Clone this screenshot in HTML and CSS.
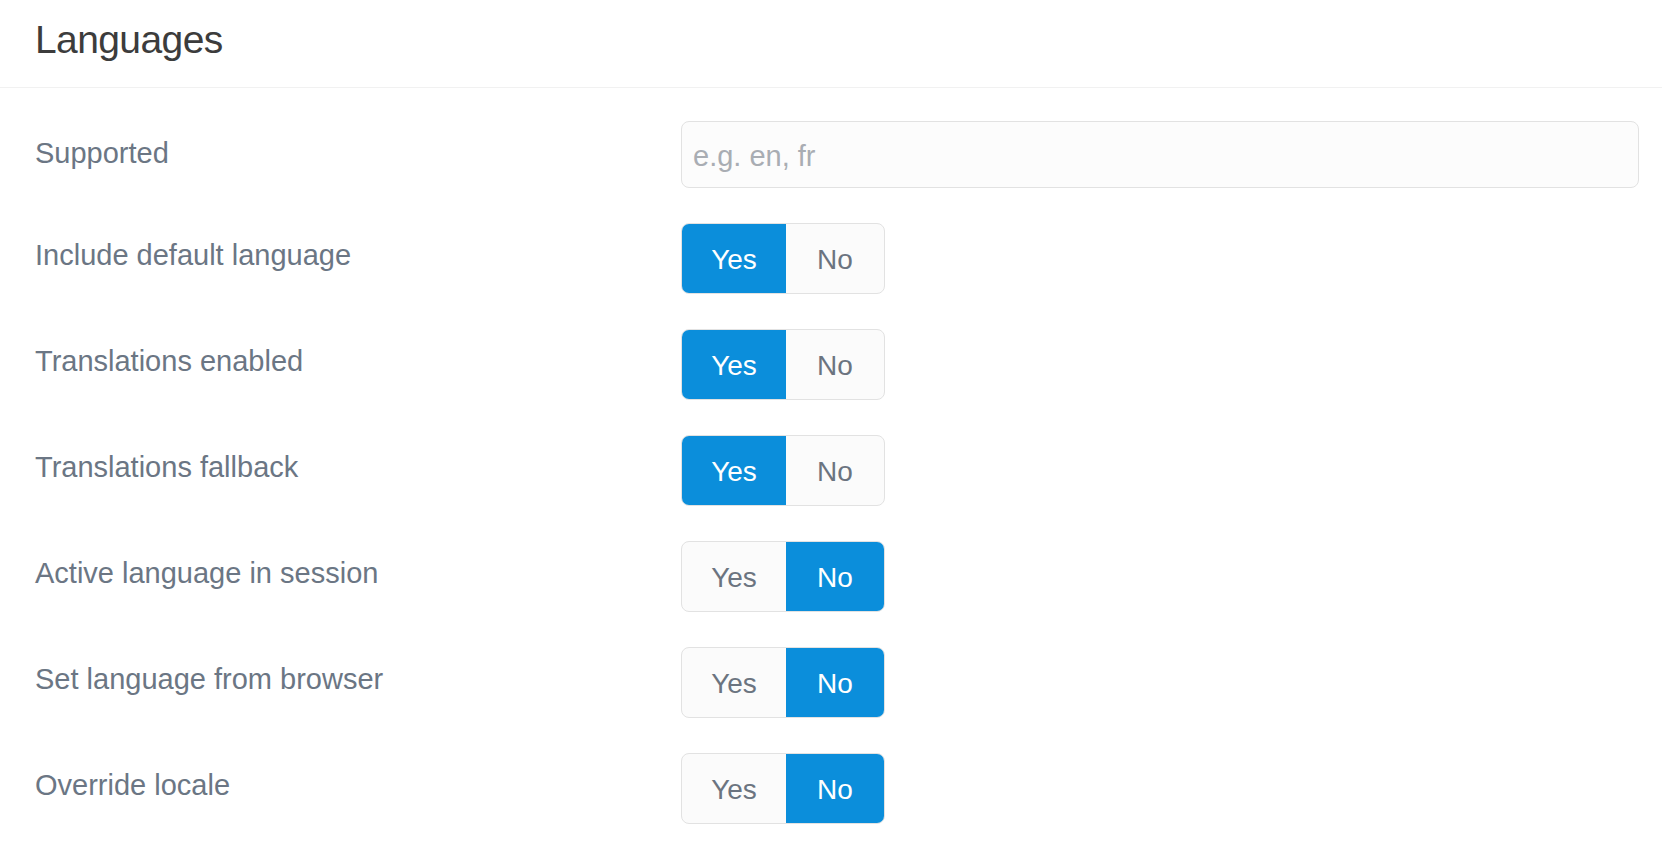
FILE: index.html
```html
<!DOCTYPE html>
<html lang="en">
<head>
<meta charset="utf-8">
<title>Languages</title>
<link rel="stylesheet" href="styles.css">
</head>
<body>
<div class="page">
  <header class="header">
    <h1 class="title">Languages</h1>
  </header>
  <div class="form">
    <div class="row">
      <label class="label">Supported</label>
      <div class="control"><input class="text-input" type="text" placeholder="e.g. en, fr"></div>
    </div>
    <div class="row">
      <label class="label">Include default language</label>
      <div class="control"><div class="toggle"><span class="seg seg-yes active">Yes</span><span class="seg seg-no">No</span></div></div>
    </div>
    <div class="row">
      <label class="label">Translations enabled</label>
      <div class="control"><div class="toggle"><span class="seg seg-yes active">Yes</span><span class="seg seg-no">No</span></div></div>
    </div>
    <div class="row">
      <label class="label">Translations fallback</label>
      <div class="control"><div class="toggle"><span class="seg seg-yes active">Yes</span><span class="seg seg-no">No</span></div></div>
    </div>
    <div class="row">
      <label class="label">Active language in session</label>
      <div class="control"><div class="toggle"><span class="seg seg-yes">Yes</span><span class="seg seg-no active">No</span></div></div>
    </div>
    <div class="row">
      <label class="label">Set language from browser</label>
      <div class="control"><div class="toggle"><span class="seg seg-yes">Yes</span><span class="seg seg-no active">No</span></div></div>
    </div>
    <div class="row">
      <label class="label">Override locale</label>
      <div class="control"><div class="toggle"><span class="seg seg-yes">Yes</span><span class="seg seg-no active">No</span></div></div>
    </div>
  </div>
</div>
</body>
</html>
```
FILE: styles.css
```css
* { box-sizing: border-box; }
html, body {
  margin: 0;
  padding: 0;
  background: #ffffff;
  font-family: "Liberation Sans", Arial, Helvetica, sans-serif;
}
.page {
  width: 1662px;
  height: 848px;
  overflow: hidden;
}
.header {
  padding: 20px 23px 28px 35px;
  border-bottom: 1px solid #f1f1f1;
}
.title {
  margin: 0;
  font-size: 39px;
  line-height: 39px;
  font-weight: 400;
  color: #3c3c3c;
  letter-spacing: -0.6px;
}
.form {
  padding: 33px 23px 0 35px;
  display: flex;
  flex-direction: column;
  gap: 35px;
}
.row {
  display: grid;
  grid-template-columns: 646px 1fr;
  align-items: start;
}
.label {
  font-size: 29px;
  line-height: 42px;
  padding-top: 11px;
  color: #6b7684;
}
.control {
  display: flex;
}
.text-input {
  width: 100%;
  height: 67px;
  border: 1px solid #e2e2e2;
  border-radius: 8px;
  background: #fcfcfc;
  padding: 3px 11px 0 11px;
  font-family: "Liberation Sans", Arial, Helvetica, sans-serif;
  font-size: 29px;
  color: #444;
  outline: none;
}
.text-input::placeholder {
  color: #a9adb3;
}
.toggle {
  display: flex;
  height: 71px;
  border: 1px solid #e2e2e2;
  border-radius: 8px;
  overflow: hidden;
  background: #fbfbfb;
}
.seg {
  display: flex;
  align-items: center;
  justify-content: center;
  font-size: 28px;
  color: #6b7480;
  height: 100%;
  padding-top: 3px;
}
.seg-yes { width: 104px; }
.seg-no { width: 98px; }
.seg.active {
  background: #0b8edb;
  color: #ffffff;
}
```
